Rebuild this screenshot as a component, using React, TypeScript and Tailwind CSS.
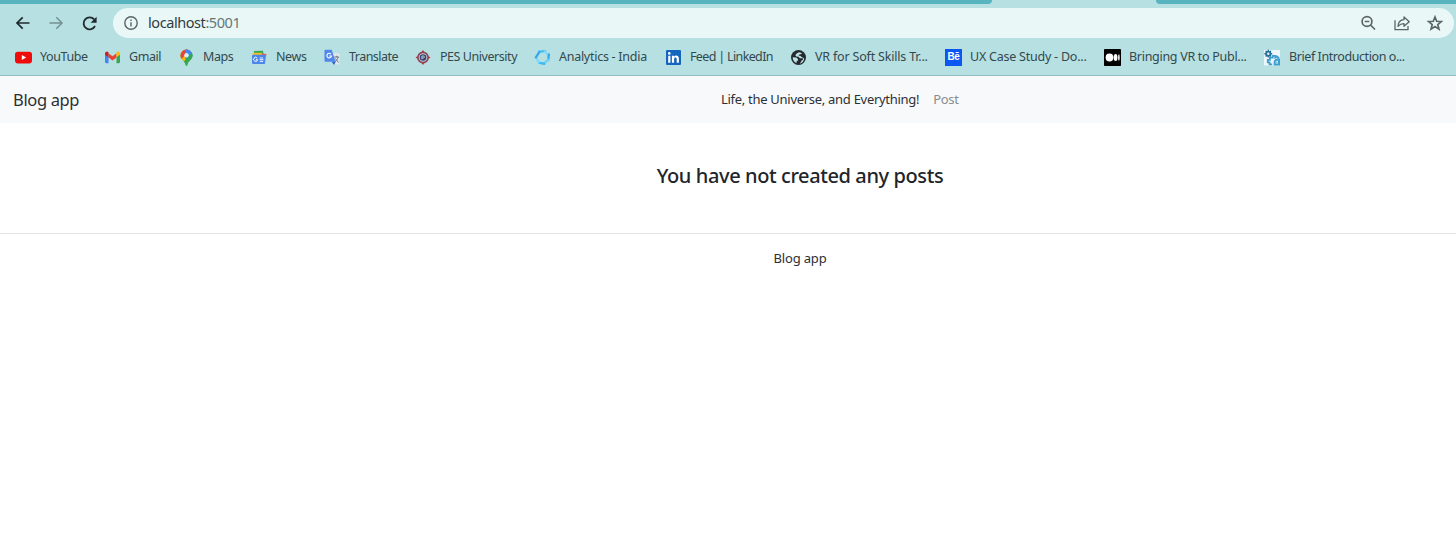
import type { ReactNode } from 'react';

const icon = 'block h-[17px] w-[17px] shrink-0';

const YouTube = () => (
  <svg className={icon} viewBox="0 0 17 17">
    <rect y="2.8" width="17" height="11.6" rx="2.8" fill="#f00b0b" />
    <path d="M6.8 6.1v5l4.3-2.5z" fill="#fff" />
  </svg>
);
const Gmail = () => (
  <svg className={icon} viewBox="0 0 17 17">
    <path d="M1 4.6l3.5 2.6v7H2.1A1.1 1.1 0 0 1 1 13.1z" fill="#4285f4" />
    <path d="M16 4.6l-3.5 2.6v7h2.4a1.1 1.1 0 0 0 1.1-1.1z" fill="#34a853" />
    <path d="M4.5 4.2l4 3 4-3v4.2l-4 3-4-3z" fill="#ea4335" />
    <path d="M1 4.4C1 2.7 2.900 2.200 4.200 3.100l.3.200v5L1 5.700z" fill="#c5221f" />
    <path d="M16 4.400c0-1.700-1.900-2.200-3.200-1.300l-.3.200v5L16 5.700z" fill="#fbbc04" />
  </svg>
);
const Maps = () => (
  <svg className={icon} viewBox="0 0 17 17">
    <defs>
      <clipPath id="pin">
        <path d="M8.500.5a6 6 0 0 0-6 6c0 4 4.600 5.300 5.200 9.500.2 1 1.400 1 1.600 0 .6-4.200 5.200-5.500 5.200-9.500a6 6 0 0 0-6-6z" />
      </clipPath>
    </defs>
    <g clipPath="url(#pin)">
      <path d="M0 0h17v17H0z" fill="#34a853" />
      <path d="M0 0h17L4 15 0 12z" fill="#fbbc04" />
      <path d="M0 0h13L2.500 11z" fill="#ea4335" />
      <path d="M7 0h10v3L8 13 7 7z" fill="#4285f4" />
      <path d="M15 2L4 15l4 2h8z" fill="#34a853" />
    </g>
    <circle cx="8.500" cy="6.300" r="2.200" fill="#d9f0f2" />
  </svg>
);
const News = () => (
  <svg className={icon} viewBox="0 0 17 17">
    <path d="M3 2l9-.3.700 5H3z" fill="#35a853" />
    <path d="M9 4.200l6.500.9-1.500 7L8 11z" fill="#e75b52" />
    <path d="M1.800 3.800l9-.1v4h-9z" fill="#f3bd2d" />
    <rect x="1" y="5.800" width="13.200" height="9.200" rx="1.200" fill="#4b86eb" />
    <path d="M6.200 9.100A2 2 0 1 0 6.600 10.700H4.900" fill="none" stroke="#fff" strokeWidth="1" />
    <path d="M8.700 9h3.300M8.700 10.700h3.800M8.700 12.400h3.300" stroke="#fff" strokeWidth=".9" />
  </svg>
);
const Translate = () => (
  <svg className={icon} viewBox="0 0 17 17">
    <path d="M6 4.200h8.700c.6 0 1 .4 1 1v9.200c0 .6-.4 1-1 1h-4.400z" fill="#e2e5e9" />
    <path d="M1.500.8h6.200l3.900 12H1.500c-.6 0-1-.4-1-1v-10c0-.6.400-1 1-1z" fill="#4f87eb" />
    <path d="M7.700 12.800h3.900l-1.500 3.100z" fill="#2c5cc5" />
    <path d="M7 5.100A2.300 2.300 0 1 0 7.500 7H5.300" fill="none" stroke="#fff" strokeWidth="1.100" />
    <path d="M10.300 8h4.700M12.700 6.800V8M14.100 8c-.4 2-1.600 3.300-3 4.500M11.400 9.500l3.200 4" fill="none" stroke="#647786" strokeWidth="1" />
  </svg>
);
const Pes = () => (
  <svg className={icon} viewBox="0 0 17 17">
    <circle cx="8" cy="8.500" r="5.100" fill="#bdd4df" stroke="#8c4352" strokeWidth="1.600" />
    <path d="M8 1L9.600 3.200H6.400zM8 16L9.600 13.800H6.400zM.5 8.500L2.700 6.900v3.200zM15.500 8.500L13.300 6.900v3.200z" fill="#bb343e" />
    <circle cx="8" cy="8.500" r="3.300" fill="#35406d" />
    <path d="M6.900 10.300V7h1.500a1 1 0 0 1 0 2H6.900" fill="none" stroke="#c4dae5" strokeWidth=".9" />
  </svg>
);
const Analytics = () => (
  <svg className={icon} viewBox="0 0 17 17" fill="none" strokeWidth="2.300" strokeLinecap="round">
    <path d="M5.200 2.600l6-.4" stroke="#42bdf3" />
    <path d="M10.900 2.500l3.600 3.500" stroke="#7edafa" />
    <path d="M14.900 5.500l-.7 5.500" stroke="#37a9ee" />
    <path d="M14.200 10.700l-4.400 4" stroke="#6bd3f8" />
    <path d="M10.300 14.900l-5.300-1.300" stroke="#3bb9f1" />
    <path d="M4.800 13.300L1.800 8" stroke="#7adafb" />
    <path d="M1.900 8.300l3.400-5.200" stroke="#34a6ec" />
  </svg>
);
const LinkedIn = () => (
  <svg className={icon} viewBox="0 0 17 17">
    <rect x="1" y="1" width="15" height="15" rx="1" fill="#1465bd" />
    <circle cx="4.300" cy="4.400" r="1.300" fill="#fff" />
    <path d="M3.200 6.700h2.200v7H3.200zM6.900 6.700H9v1c1.400-2 4.900-1.500 4.900 2v4h-2.200V10c0-2-2.600-2-2.600 0v3.700H6.900z" fill="#fff" />
  </svg>
);
const Globe = () => (
  <svg className={icon} viewBox="0 0 17 17">
    <circle cx="8.500" cy="8.500" r="7.500" fill="#25292d" />
    <path d="M9 3.200L6.600 4.600 5.300 6.300l1 1.300 2.200.2 1.400 1.400 2.900.1.200 1.100-1.400 1.400-1.800 3c2.300-.5 4.200-2.700 4.400-5.300L12 8.300 10.500 7l-2-.4 1-1.100 2-.4.3-1.200z" fill="#b9e0e4" />
    <path d="M2.700 8.300l3.700.2 1.700 1.700-.3 1.500-1.200.5v1.900C4 13.300 2.700 11 2.700 8.300z" fill="#b9e0e4" />
  </svg>
);
const Behance = () => (
  <span className="flex h-[17px] w-[17px] shrink-0 items-center justify-center bg-[#0b57f2] font-['Liberation_Sans'] text-[10px] leading-none font-bold tracking-[-0.3px] text-white">
    Bē
  </span>
);
const Medium = () => (
  <svg className={icon} viewBox="0 0 17 17">
    <rect width="17" height="17" rx=".8" fill="#000" />
    <circle cx="5.500" cy="8.500" r="3.900" fill="#fff" />
    <ellipse cx="11.600" cy="8.500" rx="1.900" ry="3.600" fill="#fff" />
    <ellipse cx="14.900" cy="8.500" rx=".8" ry="3.200" fill="#fff" />
  </svg>
);
const Gears = () => (
  <svg className={icon} viewBox="0 0 17 17" fill="none">
    <path d="M0 1h16v15.500H0z" fill="#edf7fb" />
    <circle cx="4.300" cy="4.700" r="2.100" stroke="#28729a" strokeWidth="1.800" />
    <path d="M4.300.8v1.600M4.300 7v1.600M.4 4.700H2M6.600 4.700h1.600M1.600 2l1.100 1.100M5.900 6.300L7 7.400M7 2L5.900 3.100M2.700 6.300L1.600 7.400" stroke="#28729a" strokeWidth="1.400" />
    <path d="M8.200 15.300H5.600v-2H3.800v-2.500h2.100V8.600h2.900V6.900h2.500v1.600l1.700-1.100 1.600 1.500-.8 1.300" stroke="#3e9fcf" strokeWidth="1.800" />
    <path d="M15 15.500h-4.300v-3.200l1.400-1.500H15z" stroke="#3e9fcf" strokeWidth="2" />
    <circle cx="12.900" cy="13.200" r=".7" fill="#3e9fcf" />
  </svg>
);

type Bookmark = { label: string; art: ReactNode; box: string };

const bookmarks: Bookmark[] = [
  { label: 'YouTube', art: <YouTube />, box: 'w-[89px] tracking-[-0.400px]' },
  { label: 'Gmail', art: <Gmail />, box: 'w-[74px] tracking-[-0.450px]' },
  { label: 'Maps', art: <Maps />, box: 'w-[73px] tracking-[-0.400px]' },
  { label: 'News', art: <News />, box: 'w-[73px] tracking-[-0.400px]' },
  { label: 'Translate', art: <Translate />, box: 'w-[91px] tracking-[-0.540px]' },
  { label: 'PES University', art: <Pes />, box: 'w-[119px] tracking-[-0.450px]' },
  { label: 'Analytics - India', art: <Analytics />, box: 'w-[131px] tracking-[-0.270px]' },
  { label: 'Feed | LinkedIn', art: <LinkedIn />, box: 'w-[125px] tracking-[-0.650px]' },
  { label: 'VR for Soft Skills Tr...', art: <Globe />, box: 'w-[155px] tracking-[-0.190px]' },
  { label: 'UX Case Study - Do...', art: <Behance />, box: 'w-[159px] tracking-[-0.230px]' },
  { label: 'Bringing VR to Publ...', art: <Medium />, box: 'w-[160px] tracking-[-0.290px]' },
  { label: 'Brief Introduction o...', art: <Gears />, box: 'w-[160px] tracking-[-0.420px]' },
];

function Browser() {
  return (
    <header className="h-[76px] border-b border-[#91bec3] bg-[#b7e0e3]">
      <div className="flex h-1 justify-between">
        <div className="w-[992px] rounded-br-[6px] bg-[#58b5bf]" />
        <div className="w-[300px] rounded-bl-[6px] bg-[#58b5bf]" />
      </div>
      <div className="flex h-[38px] items-center">
        <div className="flex w-[113px] shrink-0 items-center pl-[15px]">
          <svg className="h-4 w-4" viewBox="0 0 16 16" fill="none" stroke="#202a2d" strokeWidth="1.700">
            <path d="M14.500 8H2M7.700 2.300L2 8l5.700 5.700" />
          </svg>
          <svg className="ml-[17px] h-4 w-4" viewBox="0 0 16 16" fill="none" stroke="#759092" strokeWidth="1.500">
            <path d="M1.500 8H14M8.300 2.300L14 8l-5.700 5.700" />
          </svg>
          <svg className="ml-[17px] h-[17px] w-[17px]" viewBox="0 0 17 17">
            <path d="M14 11A6 6 0 1 1 13.200 4.400" fill="none" stroke="#202a2d" strokeWidth="1.800" />
            <path d="M15.600 1.800v6H9.600z" fill="#202a2d" />
          </svg>
        </div>
        <div className="mr-[2px] flex h-[30px] flex-1 items-center rounded-full bg-[#eaf7f7] pr-[11px] pl-[11px]">
          <svg className="h-[14px] w-[14px]" viewBox="0 0 14 14" fill="none" stroke="#596466" strokeWidth="1.400">
            <circle cx="7" cy="7" r="6.200" />
            <path d="M7 6.200v4.300M7 3.500v1.500" />
          </svg>
          <span className="ml-[10px] text-[14.500px] tracking-[-0.430px] text-[#303b3e]">
            localhost<span className="text-[#667678]">:5001</span>
          </span>
          <svg className="ml-auto h-4 w-4" viewBox="0 0 16 16" fill="none" stroke="#5b6567" strokeWidth="1.700">
            <circle cx="7" cy="6.500" r="4.900" />
            <path d="M4.700 6.500h4.600M10.500 10l4.500 4.500" />
          </svg>
          <svg className="ml-[17px] h-4 w-[17px]" viewBox="0 0 17 16" fill="none" stroke="#5b6567" strokeWidth="1.300">
            <path d="M2 5.200v9.500h13V11" />
            <path d="M5 11.300c.2-4.200 2.300-6.500 6-6.700V1.900l5.200 4.800-5.200 4.600V8.600c-2.500 0-4.300.7-6 2.700z" strokeLinejoin="round" />
          </svg>
          <svg className="ml-[17px] h-4 w-4" viewBox="0 0 16 16" fill="none" stroke="#5b6567" strokeWidth="1.700">
            <path d="M8 2l1.700 4.300 4.700.3-3.600 3 1.200 4.500L8 11.600l-4 2.500 1.200-4.500-3.600-3 4.700-.3z" />
          </svg>
        </div>
      </div>
      <nav className="flex h-[30px] items-center pl-[15px]">
        {bookmarks.map((b) => (
          <a key={b.label} className={`flex shrink-0 items-center gap-2 text-[12.500px] whitespace-nowrap text-[#33494d] ${b.box}`}>
            {b.art}
            <span>{b.label}</span>
          </a>
        ))}
      </nav>
    </header>
  );
}

export default function App() {
  return (
    <div className="h-[560px] w-full overflow-hidden bg-white font-['Noto_Sans','Open_Sans',sans-serif]">
      <Browser />
      <div className="w-[1600px]">
        <div className="flex h-[47px] items-center bg-[#f8f9fb] pl-[13px] text-[13px] text-[#2c3034]">
          <span className="w-[708px] pt-[2px] text-[16.500px] tracking-[-0.350px]">Blog app</span>
          <span className="tracking-[-0.290px]">Life, the Universe, and Everything!</span>
          <span className="ml-[14px] tracking-[-0.300px] text-[#898c90]">Post</span>
        </div>
        <main className="flex h-[110px] items-center justify-center pb-[4px]">
          <h1 className="text-[20px] font-medium tracking-[-0.400px] text-[#212529]">You have not created any posts</h1>
        </main>
        <footer className="flex h-[50px] items-center justify-center border-t border-[#e1e3e5] text-[13px] tracking-[-0.150px] text-[#2c3034]">
          Blog app
        </footer>
      </div>
    </div>
  );
}
